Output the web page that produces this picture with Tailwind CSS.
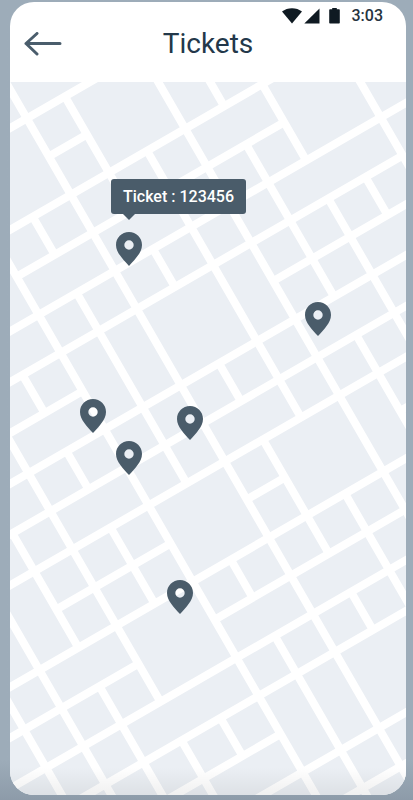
<!DOCTYPE html>
<html lang="en">
<head>
    <meta charset="UTF-8">
    <meta name="viewport" content="width=device-width, initial-scale=1.0">
    <title>Tickets</title>
    <script src="https://cdn.jsdelivr.net/npm/@tailwindcss/browser@4"></script>
</head>
<body class="flex min-h-screen bg-linear-to-b from-[#9dacb9] from-95% to-[#8d9ba9] pt-[2px] pr-[7px] pb-[5px] pl-[10px] font-['Roboto',sans-serif]">
    <div class="flex flex-1 flex-col overflow-hidden rounded-3xl bg-white">
        <header class="pb-6">
            <!-- Status bar -->
            <div class="flex h-7 items-center justify-end pr-[23px] text-[#26343f]">
                <svg class="mr-[2px] h-4 w-5 text-[#0f1a22]" viewBox="0 0 20 16" fill="currentColor" aria-hidden="true">
                    <path d="M0 3.6C2.8 1.3 6.2.2 10 .2s7.2 1.1 10 3.4L10 15.6z"/>
                </svg>
                <svg class="mr-[9px] h-4 w-4 text-[#0f1a22]" viewBox="0 0 16 16" fill="currentColor" aria-hidden="true">
                    <path d="M15.5.5v15H.3z"/>
                </svg>
                <svg class="mr-3 h-4 w-[11px] text-[#0f1a22]" viewBox="0 0 11 16" fill="currentColor" aria-hidden="true">
                    <path d="M3.2 0h4.600v1.200H10a.8.8 0 0 1 .8.8v12.800a.8.8 0 0 1-.8.8H1a.8.8 0 0 1-.8-.8V2a.8.8 0 0 1 .8-.8h2.200z"/>
                </svg>
                <span class="text-base leading-none font-medium">3:03</span>
            </div>
            <!-- Title bar -->
            <div class="grid h-7 grid-cols-[1fr_auto_1fr] items-center px-[14px]">
                <a href="#" aria-label="Back" class="justify-self-start text-[#4a5d6c]">
                    <svg class="h-6 w-[38px]" viewBox="0 0 38 24" fill="none" stroke="currentColor" stroke-width="3" stroke-linecap="round" stroke-linejoin="round" aria-hidden="true">
                        <path d="M36 11.5H2M13 1.500L2 11.500l11 10.500"/>
                    </svg>
                </a>
                <h1 class="text-[28px] leading-7 text-[#23384a]">Tickets</h1>
            </div>
        </header>

        <main class="relative flex-1 overflow-hidden bg-[#ebeff4]">
            <!-- Streets: drawn on a straight grid, then turned 30 degrees -->
            <svg class="absolute inset-0 h-full w-full" fill="none" stroke="#fff" stroke-width="8" aria-hidden="true">
                <g transform="translate(-10 -82) rotate(-30)">
                    <path d="M-200 116H200M-36 160H8M-200 204H300M-124 248H185M-300 292H400M-300 336H271M-300 380H-124M96 380H400M-400 424H400M-400 468H400M-400 512H400M-256 556H-124M-36 556H8M141 556H300M-500 600H400M-500 644H-212M-124 644H300M-500 688H400M-500 732H300M-400 776H-124M-400 820H300M-300 864H300"/>
                    <path d="M-344 500V1000M-301 450V1000M-257 644V1000M-256 468V600M-213 732V1000M-212 380V688M-168 336V380M-168 424V468M-168 512V600M-168 732V776M-124 150V1000M-80 204V248M-80 292V512M-80 600V644M-80 688V1000M-36 50V1000M8 116V248M8 292V336M8 424V468M8 512V644M8 688V732M52 204V512M52 600V900M96 50V900M141 100V204M141 248V424M141 468V900M185 204V292M185 336V700M228 336V380M271 100V500"/>
                </g>
            </svg>
            <div class="absolute inset-x-0 bottom-0 h-7 bg-linear-to-b from-black/0 to-black/6"></div>

            <!-- Ticket pins -->
            <svg class="hidden">
                <symbol id="pin" viewBox="0 0 26 34">
                    <path fill="currentColor" fill-rule="evenodd" d="M13 0C5.8 0 0 5.7 0 12.9 0 20.8 7.4 27.5 13 34c5.6-6.5 13-13.2 13-21.1C26 5.7 20.2 0 13 0zm0 8.3a4.7 4.7 0 1 1 0 9.4 4.7 4.7 0 0 1 0-9.4z"/>
                </symbol>
            </svg>
            <button aria-label="Ticket 123456" class="absolute top-[150px] left-[106px] text-[#4a5c6a]"><svg class="h-[34px] w-[26px]"><use href="#pin"/></svg></button>
            <button aria-label="Ticket" class="absolute top-[220px] left-[295px] text-[#4a5c6a]"><svg class="h-[34px] w-[26px]"><use href="#pin"/></svg></button>
            <button aria-label="Ticket" class="absolute top-[317px] left-[70px] text-[#4a5c6a]"><svg class="h-[34px] w-[26px]"><use href="#pin"/></svg></button>
            <button aria-label="Ticket" class="absolute top-[324px] left-[167px] text-[#4a5c6a]"><svg class="h-[34px] w-[26px]"><use href="#pin"/></svg></button>
            <button aria-label="Ticket" class="absolute top-[359px] left-[106px] text-[#4a5c6a]"><svg class="h-[34px] w-[26px]"><use href="#pin"/></svg></button>
            <button aria-label="Ticket" class="absolute top-[498px] left-[157px] text-[#4a5c6a]"><svg class="h-[34px] w-[26px]"><use href="#pin"/></svg></button>

            <!-- Tooltip -->
            <div role="tooltip" class="absolute top-[97px] left-[101px] rounded-[3px] bg-[#4a5c6a] px-3 text-base leading-[35px] font-medium whitespace-nowrap text-white">
                Ticket : 123456
                <svg class="absolute top-full left-3 h-[6px] w-3" viewBox="0 0 12 6" fill="#4a5c6a" aria-hidden="true"><path d="M0 0h12L6 6z"/></svg>
            </div>
        </main>
    </div>
</body>
</html>
